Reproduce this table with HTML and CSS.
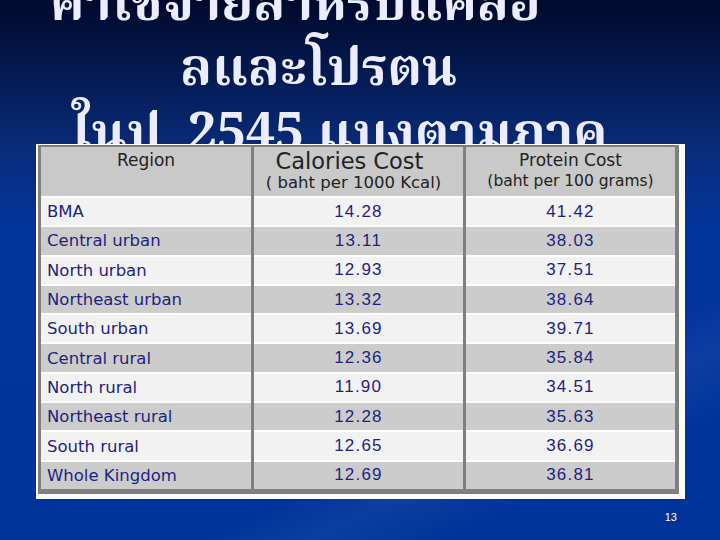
FILE: index.html
```html
<!DOCTYPE html>
<html lang="th">
<head>
<meta charset="utf-8">
<title>ค่าใช้จ่ายสำหรับแคลอรีและโปรตีน</title>
<link rel="stylesheet" href="styles.css">
</head>
<body>
<div class="slide">
  <h1 class="title">
    <span class="line l1">คาใชจายสาหรบแคลอ</span>
    <span class="line l2">ลและโปรตน</span>
    <span class="line l3">ในป&nbsp;&nbsp;2545 แบงตามภาค</span>
  </h1>
  <div class="frame">
    <div class="tbl">
      <div class="hd hd-region">Region</div>
      <div class="hd hd-cal"><span class="big">Calories Cost</span><span class="sub">( baht per 1000 Kcal)</span></div>
      <div class="hd hd-pro"><span class="mid">Protein Cost</span><span class="sub2">(baht per 100 grams)</span></div>

      <div class="c name lt">BMA</div><div class="c num lt">14.28</div><div class="c num lt">41.42</div>
      <div class="c name dk">Central urban</div><div class="c num dk">13.11</div><div class="c num dk">38.03</div>
      <div class="c name lt">North urban</div><div class="c num lt">12.93</div><div class="c num lt">37.51</div>
      <div class="c name dk">Northeast urban</div><div class="c num dk">13.32</div><div class="c num dk">38.64</div>
      <div class="c name lt">South urban</div><div class="c num lt">13.69</div><div class="c num lt">39.71</div>
      <div class="c name dk">Central rural</div><div class="c num dk">12.36</div><div class="c num dk">35.84</div>
      <div class="c name lt">North rural</div><div class="c num lt">11.90</div><div class="c num lt">34.51</div>
      <div class="c name dk">Northeast rural</div><div class="c num dk">12.28</div><div class="c num dk">35.63</div>
      <div class="c name lt">South rural</div><div class="c num lt">12.65</div><div class="c num lt">36.69</div>
      <div class="c name dk">Whole Kingdom</div><div class="c num dk">12.69</div><div class="c num dk">36.81</div>
    </div>
  </div>
  <div class="pagenum">13</div>
</div>
</body>
</html>
```
FILE: styles.css
```css
html, body {
  margin: 0;
  padding: 0;
}
body {
  width: 720px;
  height: 540px;
  overflow: hidden;
  background: #003399;
}
.slide {
  width: 720px;
  height: 540px;
  overflow: hidden;
  background:
    linear-gradient(155deg, rgba(255,255,255,0) 72%, rgba(120,150,230,0.10) 78%, rgba(255,255,255,0) 86%),
    linear-gradient(to bottom, #000a2c 0%, #041a52 14%, #0a2c7c 28%, #03349c 42%, #003399 100%);
  font-family: "DejaVu Sans", Verdana, sans-serif;
}
.title {
  margin: 0;
  height: 144px;
  overflow: hidden;
  color: #ececff;
  font-family: "Noto Serif Thai", "Norasi", "Garuda", "Loma", "Noto Sans Thai", serif;
  font-weight: bold;
  font-size: 52px;
  line-height: 65px;
  display: flex;
  flex-direction: column;
}
.line {
  display: block;
  white-space: nowrap;
}
.l1 { margin-top: -26px; margin-left: 50px; }
.l2 { margin-left: 180px; }
.l3 { margin-left: 72px; }

.frame {
  margin-left: 36px;
  width: 649px;
  height: 355px;
  box-sizing: border-box;
  background: #ffffff;
  padding: 1px 6px 5px 2px;
}
.tbl {
  box-sizing: border-box;
  height: 100%;
  border-style: solid;
  border-color: #7f7f7f;
  border-width: 2px 4px 5px 3px;
  background: #7f7f7f;
  display: grid;
  grid-template-columns: 210px 209px 209px;
  grid-template-rows: 49px repeat(10, 1fr);
  column-gap: 3px;
}
.hd {
  background: #c9c9c9;
  color: #222222;
  display: flex;
  flex-direction: column;
  align-items: center;
  white-space: nowrap;
}
.hd-region {
  font-size: 17px;
  line-height: 22px;
  padding-top: 2px;
}
.big {
  font-size: 22.5px;
  line-height: 24px;
  padding-top: 2px;
  margin-right: 18px;
}
.sub {
  font-size: 16.5px;
  line-height: 19px;
  margin-right: 10px;
}
.mid {
  font-size: 17px;
  line-height: 22px;
  padding-top: 2px;
}
.sub2 {
  font-size: 15.5px;
  line-height: 20px;
}
.c {
  box-sizing: border-box;
  border-top: 2px solid #ffffff;
  display: flex;
  align-items: center;
  color: #1f1f80;
}
.lt { background: #f2f2f2; }
.dk { background: #cccccc; }
.name {
  font-size: 16.5px;
  padding-left: 6px;
}
.num {
  justify-content: center;
  font-family: "Liberation Sans", Arial, sans-serif;
  font-size: 17px;
  letter-spacing: 1.2px;
}
.pagenum {
  margin-top: 12px;
  text-align: right;
  padding-right: 43px;
  color: #ffffff;
  font-family: "Liberation Sans", Arial, sans-serif;
  font-size: 11px;
}
```
